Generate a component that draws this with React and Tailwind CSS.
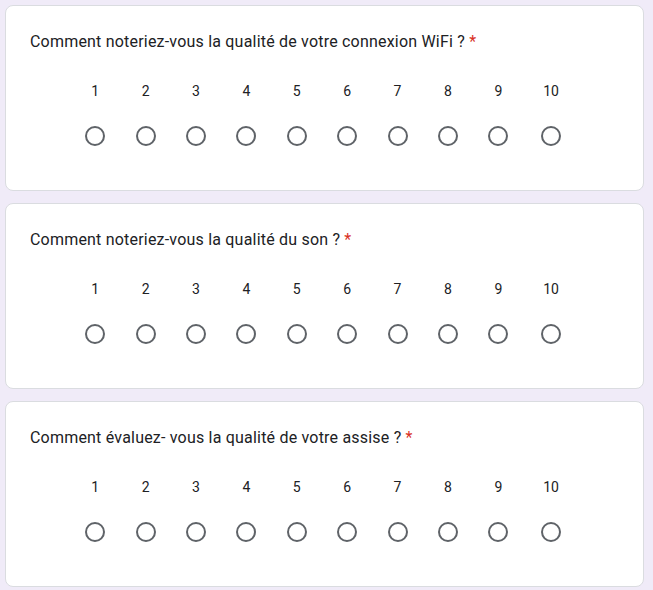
const QUESTIONS = [
  'Comment noteriez-vous la qualité de votre connexion WiFi ?',
  'Comment noteriez-vous la qualité du son ?',
  'Comment évaluez- vous la qualité de votre assise ?',
];
const SCALE = [1,2,3,4,5,6,7,8,9,10];

function Scale() {
  return (
    <div className="flex pl-[40px] mt-[27px]">
      {SCALE.map(n=>(
        <div key={n} className={`flex flex-col items-center ${n===10?'w-[55px]':'w-[50.4px]'}`}>
          <span className="text-[14px] leading-5 text-[#202124]">{n}</span>
          <span className="mt-[25px] w-5 h-5 rounded-full border-2 border-[#5f6368]" />
        </div>
      ))}
    </div>
  );
}

export default function App() {
  return (
    <div className="min-h-screen bg-[#f0ebf8] pt-[5px] pl-[5px]" style={{fontFamily:'Roboto, "Liberation Sans", sans-serif'}}>
      <div className="w-[639px] flex flex-col gap-[12px]">
        {QUESTIONS.map(q=>(
          <div key={q} className="h-[186px] bg-white border border-[#dadce0] rounded-lg pt-[24px] px-[24px]">
            <p className="text-base leading-6 tracking-[0.2px] text-[#202124]">{q} <span className="text-[#d93025]">*</span></p>
            <Scale />
          </div>
        ))}
      </div>
    </div>
  );
}
